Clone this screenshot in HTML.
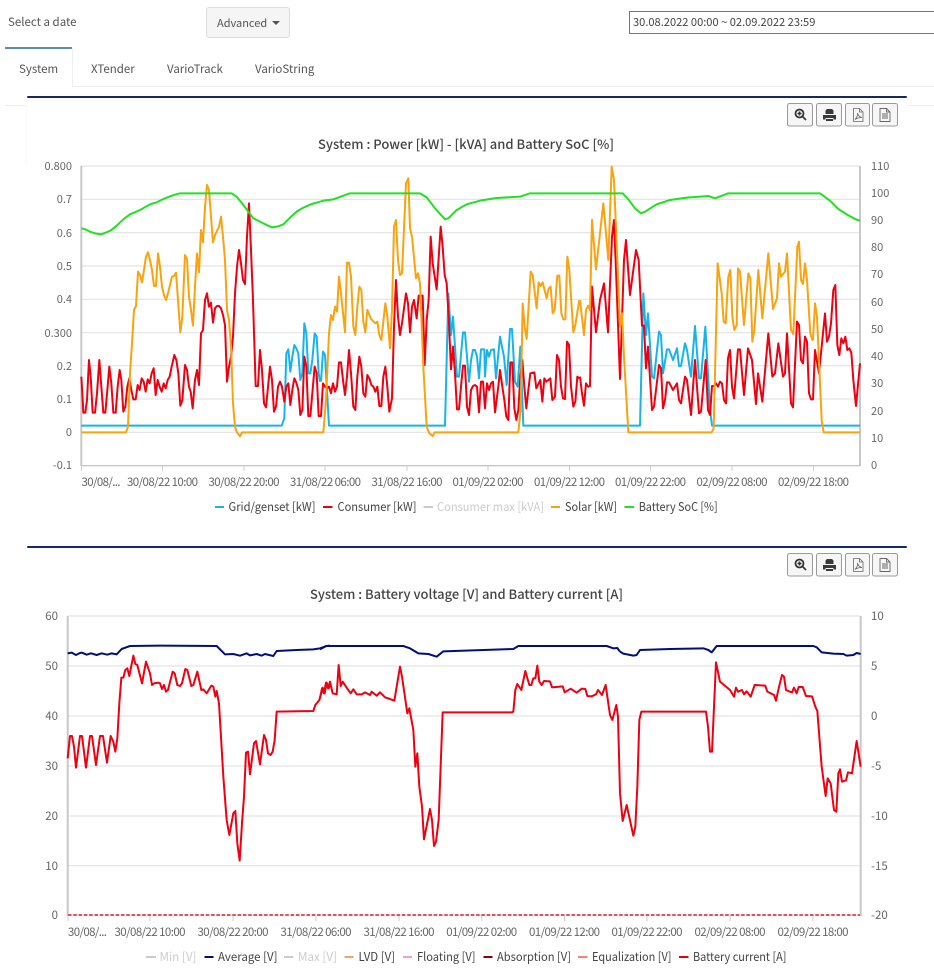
<!DOCTYPE html>
<html><head><meta charset="utf-8"><title>System</title>
<style>
html,body{margin:0;padding:0;background:#fff;width:934px;height:980px;overflow:hidden}
body{position:relative;font-family:"Noto Sans CJK JP","Liberation Sans",sans-serif;color:#555}
.abs{position:absolute}
.lbl{font-size:11.5px;line-height:16px;white-space:nowrap}
.btn{left:206px;top:7px;width:82px;height:29px;background:#f5f5f5;border:1px solid #ddd;border-radius:3px}
.input{left:629px;top:11px;width:320px;height:21px;border:1px solid #767676;box-sizing:content-box}
svg{position:absolute;left:0;top:0}
svg text{font-family:"Noto Sans CJK JP","Liberation Sans",sans-serif;font-size:11.5px;fill:#666}
.y text{font-size:11px}
.t{font-size:13px!important;fill:#444!important;font-weight:500}
.k{font-size:12px!important;fill:#444!important}
.d{fill:#ccc!important}
.g{stroke:#e3e3e3;stroke-width:1.2;fill:none}
.a{stroke:#c8c8c8;stroke-width:2;fill:none}
.tk{stroke:#ccc;stroke-width:1;fill:none}
.p{fill:none;stroke-width:6;stroke-linejoin:round}
.r{stroke:#ee0010}.o{stroke:#f9a30f}.c{stroke:#16b4ea}.v{stroke:#22e022}.n{stroke:#000f7c}
.ib{fill:#f6f6f6;stroke:#9a9a9a;stroke-width:1}
</style></head><body>

<div class="abs lbl" style="left:8px;top:14px;width:67px">Select a date</div>
<div class="abs btn"></div>
<div class="abs lbl" style="left:217px;top:15px;font-size:11px">Advanced</div>
<div class="abs" style="left:272px;top:21px;width:0;height:0;border-left:4px solid transparent;border-right:4px solid transparent;border-top:4px solid #555"></div>
<div class="abs input"></div>
<div class="abs lbl" style="left:633px;top:14px;color:#444;font-size:11.1px">30.08.2022 00:00 ~ 02.09.2022 23:59</div>

<div class="abs" style="left:5px;top:47px;width:67px;height:2px;background:#5b8fa8"></div>
<div class="abs" style="left:72px;top:49px;width:1px;height:38px;background:#eee"></div>
<div class="abs" style="left:72px;top:86px;width:862px;height:1px;background:#eee"></div>
<div class="abs" style="left:5px;top:105px;width:22px;height:1px;background:#eee"></div>
<div class="abs" style="left:907px;top:105px;width:27px;height:1px;background:#eee"></div>
<div class="abs" style="left:26px;top:105px;width:1px;height:60px;background:#f8f8f8"></div>
<div class="abs lbl" style="left:19px;top:61px">System</div>
<div class="abs lbl" style="left:91px;top:61px">XTender</div>
<div class="abs lbl" style="left:167px;top:61px">VarioTrack</div>
<div class="abs lbl" style="left:255px;top:61px">VarioString</div>

<div class="abs" style="left:27px;top:96px;width:880px;height:2px;background:#14296b;border-radius:2px"></div>
<div class="abs" style="left:27px;top:546px;width:880px;height:2px;background:#14296b;border-radius:2px"></div>

<svg width="934" height="980" viewBox="0 0 934 980" xmlns="http://www.w3.org/2000/svg">
<!-- toolbar 1 -->
<g id="tb1">
<rect class="ib" x="787.5" y="103.5" width="25" height="22.5" rx="2"/>
<rect class="ib" x="816.5" y="103.5" width="25" height="22.5" rx="2"/>
<rect class="ib" x="845.5" y="103.5" width="24" height="22.5" rx="2"/>
<rect class="ib" x="872.5" y="103.5" width="25" height="22.5" rx="2"/>
<circle cx="799.5" cy="113.5" r="4" fill="none" stroke="#333" stroke-width="1.8"/>
<path d="M802.5 116.5l3.5 3.5M797.5 113.5h4M799.5 111.5v4" stroke="#333" stroke-width="1.6" fill="none"/>
<path d="M825.500 114h8v-3.500l-1.500-1.500h-5l-1.500 1.500zM823 115h13v4.500h-2.500v-1.500h-8v1.500h-2.500zM826 119h7v2h-7z" fill="#3a3a3a"/>
<path d="M853.500 108.500h6l3.500 3.500v9.500h-9.500zM859.500 108.500v3.500h3.500M855 119.500c2-2 3-5 2.500-6.500c1 3 2 4 4.500 4.500c-3 0-5 .5-7 2z" fill="none" stroke="#666" stroke-width=".8"/>
<path d="M880 108.500h6.500l3.500 3.500v9.500h-10zM886.500 108.500v3.500h3.500M882 114h6M882 116h6M882 118h6" fill="none" stroke="#666" stroke-width=".9"/>
</g>
<g transform="translate(0,450)">
<rect class="ib" x="787.5" y="103.5" width="25" height="22.5" rx="2"/>
<rect class="ib" x="816.5" y="103.5" width="25" height="22.5" rx="2"/>
<rect class="ib" x="845.5" y="103.5" width="24" height="22.5" rx="2"/>
<rect class="ib" x="872.5" y="103.5" width="25" height="22.5" rx="2"/>
<circle cx="799.5" cy="113.5" r="4" fill="none" stroke="#333" stroke-width="1.8"/>
<path d="M802.5 116.5l3.5 3.5M797.5 113.5h4M799.5 111.5v4" stroke="#333" stroke-width="1.6" fill="none"/>
<path d="M825.500 114h8v-3.500l-1.500-1.500h-5l-1.500 1.500zM823 115h13v4.500h-2.500v-1.500h-8v1.500h-2.500zM826 119h7v2h-7z" fill="#3a3a3a"/>
<path d="M853.500 108.500h6l3.500 3.500v9.500h-9.500zM859.500 108.500v3.500h3.500M855 119.500c2-2 3-5 2.500-6.500c1 3 2 4 4.500 4.500c-3 0-5 .5-7 2z" fill="none" stroke="#666" stroke-width=".8"/>
<path d="M880 108.500h6.500l3.500 3.500v9.500h-10zM886.500 108.500v3.500h3.500M882 114h6M882 116h6M882 118h6" fill="none" stroke="#666" stroke-width=".9"/>
</g>

<!-- CHART 1 -->
<text class="t" x="318" y="149" textLength="296" lengthAdjust="spacingAndGlyphs">System : Power [kW] - [kVA] and Battery SoC [%]</text>
<path class="g" d="M81 166H860M81 199.300H860M81 232.700H860M81 266H860M81 299.300H860M81 332.700H860M81 365.700H860M81 399H860M81 432.300H860"/>
<path class="a" d="M81.300 166V466M860 166V466"/>
<path class="a" style="stroke-width:1.400" d="M81 465.700H860"/>
<path class="tk" d="M81.500 466v5M162.500 466v5M244 466v5M325 466v5M407 466v5M488 466v5M569.500 466v5M650.500 466v5M732 466v5M813.500 466v5"/>
<g text-anchor="end" class="y">
<text x="72" y="170">0.800</text><text x="72" y="203">0.7</text><text x="72" y="237">0.6</text><text x="72" y="270">0.5</text><text x="72" y="303">0.4</text><text x="72" y="337">0.300</text><text x="72" y="370">0.2</text><text x="72" y="403">0.1</text><text x="72" y="436">0</text><text x="72" y="469">-0.1</text>
</g>
<g class="y">
<text x="871" y="170">110</text><text x="871" y="197">100</text><text x="871" y="224">90</text><text x="871" y="251">80</text><text x="871" y="278">70</text><text x="871" y="306">60</text><text x="871" y="333">50</text><text x="871" y="360">40</text><text x="871" y="387">30</text><text x="871" y="415">20</text><text x="871" y="442">10</text><text x="871" y="469">0</text>
</g>
<g text-anchor="middle">
<text x="101" y="486" textLength="39">30/08/...</text>
<text x="162.500" y="486" textLength="71">30/08/22 10:00</text>
<text x="244" y="486" textLength="71">30/08/22 20:00</text>
<text x="325.500" y="486" textLength="71">31/08/22 06:00</text>
<text x="407" y="486" textLength="71">31/08/22 16:00</text>
<text x="488" y="486" textLength="71">01/09/22 02:00</text>
<text x="569.500" y="486" textLength="71">01/09/22 12:00</text>
<text x="650.500" y="486" textLength="71">01/09/22 22:00</text>
<text x="732" y="486" textLength="71">02/09/22 08:00</text>
<text x="813.500" y="486" textLength="71">02/09/22 18:00</text>
</g>
<!-- legend 1 -->
<rect x="215" y="506" width="9" height="2" fill="#16b4ea"/><text class="k" x="228.500" y="511" textLength="87" lengthAdjust="spacingAndGlyphs">Grid/genset [kW]</text>
<rect x="323" y="506" width="9.500" height="2" fill="#e8000d"/><text class="k" x="337.500" y="511" textLength="79" lengthAdjust="spacingAndGlyphs">Consumer [kW]</text>
<rect x="423.500" y="506" width="9.500" height="2" fill="#ccc"/><text class="k d" x="437" y="511" textLength="107" lengthAdjust="spacingAndGlyphs">Consumer max [kVA]</text>
<rect x="551" y="506" width="9" height="2" fill="#f9a30f"/><text class="k" x="565" y="511" textLength="52" lengthAdjust="spacingAndGlyphs">Solar [kW]</text>
<rect x="624.500" y="506" width="9.500" height="2" fill="#22e022"/><text class="k" x="638.700" y="511" textLength="79" lengthAdjust="spacingAndGlyphs">Battery SoC [%]</text>

<!-- series chart 1 -->
<g transform="translate(40,160) scale(.33333)">
<polyline class="p c" points="124,797 725,797 733,775 739,580 745,568 751,635 757,590 763,555 769,565 775,580 781,660 787,640 793,490 799,520 805,640 811,640 817,600 824,520 830,530 836,640 840,665"/>
<polyline class="p r" points="124,650 127,700 130,758 136,758 141,720 147,600 152,650 158,758 165,758 171,700 178,600 184,680 190,758 196,758 202,690 208,620 214,670 220,758 227,758 233,680 239,630 244,660 250,755 256,740 262,680 268,655 274,690 280,718 287,718 293,675 299,690 305,655 311,665 317,695 323,658 329,670 335,640 341,625 347,705 353,660 359,680 365,695 371,670 377,685 383,660 389,650 395,620 403,585 409,600 415,640 421,737 427,720 435,615 441,630 447,680 452,695 458,745 465,660 471,630 477,675 483,520 489,510 495,420 501,400 507,440 513,428 519,488 525,445 531,438 537,438 543,445 549,465 555,495 561,665 567,620 573,590 579,530 585,400 591,320 597,270 603,310 609,360 615,372 621,230 627,130 633,270 639,420 647,678 654,678 660,570 666,630 672,730 678,742 690,620 696,660 702,755 708,740 714,680 720,665 726,680 733,725 739,680 745,670 751,735 757,690 763,655 769,668 775,690 781,765 787,750 793,590 799,620 805,768 811,768 817,700 824,620 830,640 836,768 840,768"/>
<polyline class="p o" points="124,817 258,817 264,800 270,640 276,550 282,450 288,438 294,335 300,345 306,367 312,330 318,290 324,277 330,300 336,330 342,378 348,378 354,280 360,320 366,380 372,405 378,420 384,400 396,350 402,348 408,338 414,420 421,517 427,470 435,285 441,298 447,410 453,450 459,497 465,380 471,280 477,337 483,210 489,247 495,140 501,75 507,90 513,170 519,247 525,225 537,200 543,170 549,230 555,300 561,450 567,480 573,560 579,730 585,800 591,817 600,829 606,817 840,817"/>
<polyline class="p v" points="124,205 136,208 150,215 165,220 183,223 195,219 213,211 230,197 250,178 270,163 300,150 330,133 350,127 370,117 395,107 420,100 575,100 590,110 610,135 640,175 670,190 695,202 715,199 730,193 750,173 770,155 790,143 815,132 840,125"/>
</g>
<g transform="translate(310,160) scale(.33333)">
<polyline class="p c" points="33,665 39,575 45,585 57,797 405,797 415,400 423,525 429,470 435,560 441,650 447,650 459,517 465,517 477,665 483,600 489,570 495,570 501,590 507,655 513,568 523,568 525,650 531,570 537,590 543,570 552,568 558,655 570,530 582,590 590,675 600,507 606,507 615,665 623,680 631,560 640,797 810,797"/>
<polyline class="p r" points="30,768 33,768 39,670 45,680 51,685 57,680 63,700 69,670 75,695 81,680 87,607 93,607 99,660 105,705 111,650 117,570 123,640 130,740 136,750 142,650 148,590 154,620 160,700 166,710 172,645 178,655 184,675 190,680 196,695 202,680 208,738 214,738 220,650 226,620 232,680 238,755 246,715 252,500 258,360 264,470 270,525 276,490 288,400 294,430 300,517 306,440 312,420 320,475 326,407 338,407 344,615 350,480 356,420 362,230 368,310 380,388 392,200 398,260 404,345 410,370 416,470 423,628 429,560 435,640 441,748 447,748 453,680 459,617 465,617 471,740 477,765 483,690 489,678 495,675 501,680 507,757 513,665 519,665 525,745 531,670 537,690 543,670 549,665 555,757 565,680 570,630 577,680 583,720 589,770 595,780 601,607 607,607 613,745 619,780 625,750 631,650 637,600 643,680 649,745 655,690 661,640 673,637 679,685 691,660 697,725 703,655 709,665 715,660 721,655 727,720 735,710 741,585 747,600 753,680 759,715 765,717 771,545 777,555 783,680 790,740 796,725 802,650 808,655"/>
<polyline class="p o" points="30,817 40,817 48,720 57,520 63,465 69,480 75,440 81,455 87,350 93,400 105,517 111,308 117,308 123,350 130,500 136,525 142,440 148,380 154,390 160,485 166,517 172,450 178,465 184,478 196,490 202,485 208,525 214,540 226,430 232,470 240,565 246,450 252,200 258,180 264,300 270,345 276,340 288,70 295,55 300,205 306,230 318,355 324,340 330,370 340,620 350,800 358,820 368,828 374,817 625,817 632,750 638,430 644,500 650,537 662,335 668,345 680,445 686,367 692,378 698,367 710,415 716,385 722,380 728,460 734,450 742,347 748,347 754,460 760,478 766,478 772,290 778,330 790,517 796,495 808,420"/>
<polyline class="p v" points="30,125 40,122 70,118 120,100 330,100 350,112 375,145 405,178 415,175 440,150 470,133 510,122 560,114 630,110 660,100 810,100"/>
</g>
<g transform="translate(580,160) scale(.33333)">
<polyline class="p c" points="0,797 180,797 190,400 198,525 204,460 216,650 222,655 237,515 243,525 249,640 261,568 267,568 279,600 291,565 297,618 303,618 315,550 321,570 333,650 345,498 357,655 363,655 376,500 390,750 396,797 840,797"/>
<polyline class="p r" points="0,650 6,700 12,737 18,670 24,680 30,678 36,380 48,517 60,420 72,370 84,517 96,230 102,180 108,330 120,657 132,300 138,240 150,405 168,270 176,300 186,497 192,497 198,625 204,560 216,750 222,740 237,615 243,625 249,745 255,720 261,667 267,667 279,690 291,670 297,720 303,730 315,650 321,660 333,765 345,600 357,760 363,755 377,600 384,750 390,765 396,678 402,678 408,670 414,680 420,665 426,670 432,720 438,730 444,595 450,570 456,680 462,715 474,568 480,568 492,705 504,565 516,600 528,732 534,640 547,725 565,520 577,650 585,640 595,550 609,650 615,640 621,520 633,730 639,742 651,485 657,495 663,600 669,610 675,530 681,545 687,700 693,718 699,718 705,570 717,640 735,460 741,545 747,530 753,490 760,390 766,375 772,555 778,585 784,535 790,550 796,530 802,570 808,565 814,578 820,660 828,738 840,610"/>
<polyline class="p o" points="0,420 12,525 18,450 24,437 30,450 36,180 48,328 70,130 85,300 95,20 102,60 112,300 120,500 126,460 132,590 145,817 395,817 401,805 413,310 425,400 431,485 437,490 445,350 451,330 457,470 463,510 470,495 474,325 480,335 492,495 505,340 511,355 517,545 523,510 535,330 547,475 565,280 579,447 591,415 597,310 603,350 615,335 621,280 633,510 640,522 652,260 657,245 663,360 669,372 675,310 681,360 691,520 697,540 699,538 705,430 711,470 725,780 731,817 840,817"/>
<polyline class="p v" points="0,100 128,100 145,118 165,145 183,160 195,155 230,133 270,120 320,113 385,108 405,115 445,100 720,100 750,122 775,147 800,163 825,177 840,182"/>
</g>

<!-- CHART 2 -->
<text class="t" x="310" y="599" textLength="313" lengthAdjust="spacingAndGlyphs">System : Battery voltage [V] and Battery current [A]</text>
<path class="g" d="M68 616H860M68 666H860M68 716H860M68 766H860M68 816H860M68 865.700H860"/>
<path class="a" d="M67.700 616V916M860.700 616V916"/>
<path class="tk" d="M150 916v5M233 916v5M316 916v5M399 916v5M481.700 916v5M564.500 916v5M647 916v5M730 916v5M813 916v5M68 916v5"/>
<path d="M68 915H860" stroke="#eee" stroke-width="2"/>
<path d="M68 915H860" stroke="#dd5560" stroke-width="2" stroke-dasharray="3.500 1.800"/>
<g text-anchor="end">
<text x="58" y="620">60</text><text x="58" y="670">50</text><text x="58" y="720">40</text><text x="58" y="770">30</text><text x="58" y="820">20</text><text x="58" y="870">10</text><text x="58" y="919">0</text>
</g>
<text x="871" y="620">10</text><text x="871" y="670">5</text><text x="871" y="720">0</text><text x="871" y="770">-5</text><text x="871" y="820">-10</text><text x="871" y="870">-15</text><text x="871" y="919">-20</text>
<g text-anchor="middle">
<text x="87.500" y="936" textLength="39">30/08/...</text>
<text x="150" y="936" textLength="71">30/08/22 10:00</text>
<text x="233" y="936" textLength="71">30/08/22 20:00</text>
<text x="316" y="936" textLength="71">31/08/22 06:00</text>
<text x="399" y="936" textLength="71">31/08/22 16:00</text>
<text x="481.700" y="936" textLength="71">01/09/22 02:00</text>
<text x="564.500" y="936" textLength="71">01/09/22 12:00</text>
<text x="647" y="936" textLength="71">01/09/22 22:00</text>
<text x="730" y="936" textLength="71">02/09/22 08:00</text>
<text x="813" y="936" textLength="71">02/09/22 18:00</text>
</g>
<!-- legend 2 -->
<rect x="146" y="956" width="10" height="2" fill="#ccc"/><text class="k d" x="159.500" y="961" textLength="37" lengthAdjust="spacingAndGlyphs">Min [V]</text>
<rect x="204.500" y="956" width="9" height="2" fill="#000f7c"/><text class="k" x="218" y="961" textLength="59.500" lengthAdjust="spacingAndGlyphs">Average [V]</text>
<rect x="284" y="956" width="9.500" height="2" fill="#ccc"/><text class="k d" x="298" y="961" textLength="39" lengthAdjust="spacingAndGlyphs">Max [V]</text>
<rect x="344.500" y="956" width="9" height="2" fill="#f4a460"/><text class="k" x="358.500" y="961" textLength="36.500" lengthAdjust="spacingAndGlyphs">LVD [V]</text>
<rect x="403" y="956" width="9" height="2" fill="#e9a0d8"/><text class="k" x="417" y="961" textLength="58.500" lengthAdjust="spacingAndGlyphs">Floating [V]</text>
<rect x="483.500" y="956" width="9" height="2" fill="#8b0000"/><text class="k" x="497" y="961" textLength="74" lengthAdjust="spacingAndGlyphs">Absorption [V]</text>
<rect x="578" y="956" width="9.500" height="2" fill="#fa8072"/><text class="k" x="592" y="961" textLength="79.500" lengthAdjust="spacingAndGlyphs">Equalization [V]</text>
<rect x="679" y="956" width="9.500" height="2" fill="#e8000d"/><text class="k" x="693" y="961" textLength="93.500" lengthAdjust="spacingAndGlyphs">Battery current [A]</text>

<!-- series chart 2 -->
<g transform="translate(30,610) scale(.33333)">
<polyline class="p n" points="113,130 125,128 138,135 150,129 156,128 170,134 183,130 200,135 215,130 232,134 245,130 260,133 275,117 300,108 390,107 560,108 570,118 585,133 610,132 630,137 650,130 660,136 680,132 695,137 705,132 730,138 740,123 800,120 850,118 870,115 890,108 900,107"/>
<polyline class="p r" points="113,445 120,378 126,378 132,410 138,473 150,378 156,378 168,473 180,378 186,378 198,465 210,378 219,378 231,458 242,378 250,395 256,425 262,385 268,280 274,203 280,203 286,180 292,175 298,198 310,137 316,162 322,165 336,220 348,155 360,190 366,225 372,220 385,218 390,220 396,237 402,225 408,245 414,240 428,185 434,190 442,225 450,228 456,220 466,177 472,180 484,228 490,225 502,185 514,240 520,238 530,250 544,227 550,230 556,260 560,243 567,280 580,500 590,630 598,675 610,610 616,603 622,700 629,752 636,640 642,560 648,428 654,425 660,493 672,400 678,393 690,463 702,375 708,390 714,430 722,435 728,425 734,390 740,305 850,303 856,285 868,270 878,233 884,250 890,218 896,235 900,225"/>
</g>
<g transform="translate(320,610) scale(.33333)">
<polyline class="p n" points="0,118 18,108 250,108 270,115 295,130 325,132 350,140 370,124 580,117 595,108 860,108 880,115 892,114 900,125"/>
<polyline class="p r" points="0,265 6,235 12,250 18,218 24,235 30,215 38,250 50,253 56,165 62,228 68,215 80,233 92,250 100,238 110,253 125,253 135,247 150,255 155,245 170,257 180,247 195,262 210,267 223,272 240,170 246,200 262,310 268,295 280,360 286,470 292,430 298,530 306,590 312,688 330,597 336,630 342,708 348,695 356,630 368,307 575,307 580,305 586,240 592,222 604,240 616,183 628,225 634,225 640,205 646,205 652,167 658,215 665,225 672,213 690,214 696,232 728,229 734,247 752,236 770,248 785,236 796,237 802,258 815,259 828,253 834,240 846,255 857,225 870,315 877,330 889,285 894,320 900,550"/>
</g>
<g transform="translate(620,610) scale(.33333)">
<polyline class="p n" points="0,125 10,131 40,137 50,135 60,120 150,117 250,115 265,120 275,127 290,108 580,108 590,112 605,127 640,131 670,132 680,137 700,135 710,129 722,132"/>
<polyline class="p r" points="0,550 8,633 20,585 40,677 46,650 52,530 58,330 64,305 258,305 264,350 270,425 276,425 288,157 300,215 330,240 342,260 348,233 354,245 366,240 372,253 380,244 392,260 404,225 436,227 442,245 462,255 468,272 476,235 486,195 492,200 498,240 510,245 516,247 522,233 530,250 536,231 548,231 558,258 576,259 586,290 592,303 605,470 617,558 623,505 632,520 642,600 649,605 655,490 660,478 666,515 678,511 684,487 696,490 710,393 722,470"/>
</g>
</svg>
</body></html>
